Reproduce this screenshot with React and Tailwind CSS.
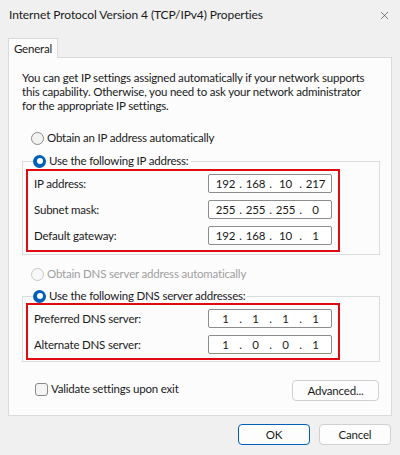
import { X } from 'lucide-react';

const font = { fontFamily: 'Lato, "Noto Sans", sans-serif' };

// Windows 11 style radio button
function Radio({ checked, disabled }) {
  if (checked) {
    return (
      <span className="flex items-center justify-center w-[13px] h-[13px] rounded-full bg-[#005fb8] shrink-0">
        <span className="w-[6px] h-[6px] rounded-full bg-white"></span>
      </span>
    );
  }
  return (
    <span
      className={`block w-[13px] h-[13px] rounded-full border shrink-0 ${
        disabled ? 'border-[#c8c8c8] bg-[#f8f8f8]' : 'border-[#8a8a8a] bg-[#f2f2f2]'
      }`}
    ></span>
  );
}

function IpField({ parts }) {
  return (
    <div className="flex items-center w-[124px] h-[19px] border border-[#8c8c8c] rounded-[2px] bg-white pl-[5px] text-[#1a1a1a]">
      {parts.map((p, i) => (
        <div key={i} className="flex items-center">
          <span className="w-[23px] text-center">{p}</span>
          {i < 3 && <span className="w-[7px] text-center">.</span>}
        </div>
      ))}
    </div>
  );
}

function Row({ label, parts }) {
  return (
    <div className="flex items-center justify-between">
      <span className="text-[#1a1a1a]">{label}</span>
      <IpField parts={parts} />
    </div>
  );
}

function Group({ legend, children }) {
  return (
    <fieldset className="border border-[#dcdcdc] mr-[11px] px-[3px]">
      <legend className="flex items-center gap-[3px] ml-[7px] pr-[2px] h-[14px]">
        <Radio checked />
        <span className="text-[#1a1a1a] leading-[14px]">{legend}</span>
      </legend>
      {children}
    </fieldset>
  );
}

export default function App() {
  return (
    <div
      className="w-[400px] h-[455px] bg-[#f0f0f0] flex flex-col leading-[14px] text-[11.5px] tracking-[-0.2px]"
      style={font}
    >
      {/* Title bar */}
      <div className="h-[30px] flex items-center justify-between pl-[9px] pr-[9px] shrink-0">
        <span className="text-[12px] tracking-[-0.1px] text-[#1a1a1a]">Internet Protocol Version 4 (TCP/IPv4) Properties</span>
        <X size={13} strokeWidth={1.1} className="text-[#333]" />
      </div>

      {/* Tab strip */}
      <div className="mt-[8px] px-[8px]">
        <div className="relative z-10 -mb-px w-[50px] h-[20px] border border-b-0 border-[#dadada] bg-[#fcfcfc] flex items-center justify-center text-[#1a1a1a]">
          General
        </div>
        <div className="h-[359px] border border-[#dadada] bg-[#fcfcfc] pl-[13px] pt-[13px]">
          <p className="leading-[14px] text-[#1a1a1a] whitespace-nowrap">
            You can get IP settings assigned automatically if your network supports
            <br />
            this capability. Otherwise, you need to ask your network administrator
            <br />
            for the appropriate IP settings.
          </p>

          <div className="mt-[18px] flex items-center gap-[3px] pl-[9px] h-[14px]">
            <Radio />
            <span className="text-[#1a1a1a]">Obtain an IP address automatically</span>
          </div>

          <div className="mt-[9px]">
            <Group legend="Use the following IP address:">
              <div className="mt-[1px] mb-[2px] border-2 border-[#e00a12] w-[314px] px-[6px] pt-[3px] pb-[5px] flex flex-col gap-[7px]">
                <Row label="IP address:" parts={['192', '168', '10', '217']} />
                <Row label="Subnet mask:" parts={['255', '255', '255', '0']} />
                <Row label="Default gateway:" parts={['192', '168', '10', '1']} />
              </div>
            </Group>
          </div>

          <div className="mt-[12px] flex items-center gap-[3px] pl-[9px] h-[14px]">
            <Radio disabled />
            <span className="text-[#a0a0a0]">Obtain DNS server address automatically</span>
          </div>

          <div className="mt-[8px]">
            <Group legend="Use the following DNS server addresses:">
              <div className="mb-[1px] border-2 border-[#e00a12] w-[314px] px-[6px] pt-[4px] pb-[4px] flex flex-col gap-[7px]">
                <Row label="Preferred DNS server:" parts={['1', '1', '1', '1']} />
                <Row label="Alternate DNS server:" parts={['1', '0', '0', '1']} />
              </div>
            </Group>
          </div>

          <div className="mt-[20px] flex items-start justify-between pr-[12px]">
            <div className="flex items-center gap-[3px] pl-[13px] h-[14px]">
              <span className="block w-[13px] h-[13px] rounded-[3px] border border-[#8a8a8a] bg-[#f4f4f4]"></span>
              <span className="text-[#1a1a1a]">Validate settings upon exit</span>
            </div>
            <button className="w-[87px] h-[21px] rounded-[4px] border border-[#d0d0d0] bg-[#fdfdfd] text-[#1a1a1a] mt-[-2px]">
              Advanced...
            </button>
          </div>
        </div>
      </div>

      {/* Dialog buttons */}
      <div className="mt-[8px] flex justify-end gap-[9px] pr-[9px]">
        <button className="w-[72px] h-[21px] rounded-[4px] border border-[#005fb8] bg-[#fdfdfd] text-[#1a1a1a]">
          OK
        </button>
        <button className="w-[72px] h-[21px] rounded-[4px] border border-[#d0d0d0] bg-[#fdfdfd] text-[#1a1a1a]">
          Cancel
        </button>
      </div>
    </div>
  );
}
